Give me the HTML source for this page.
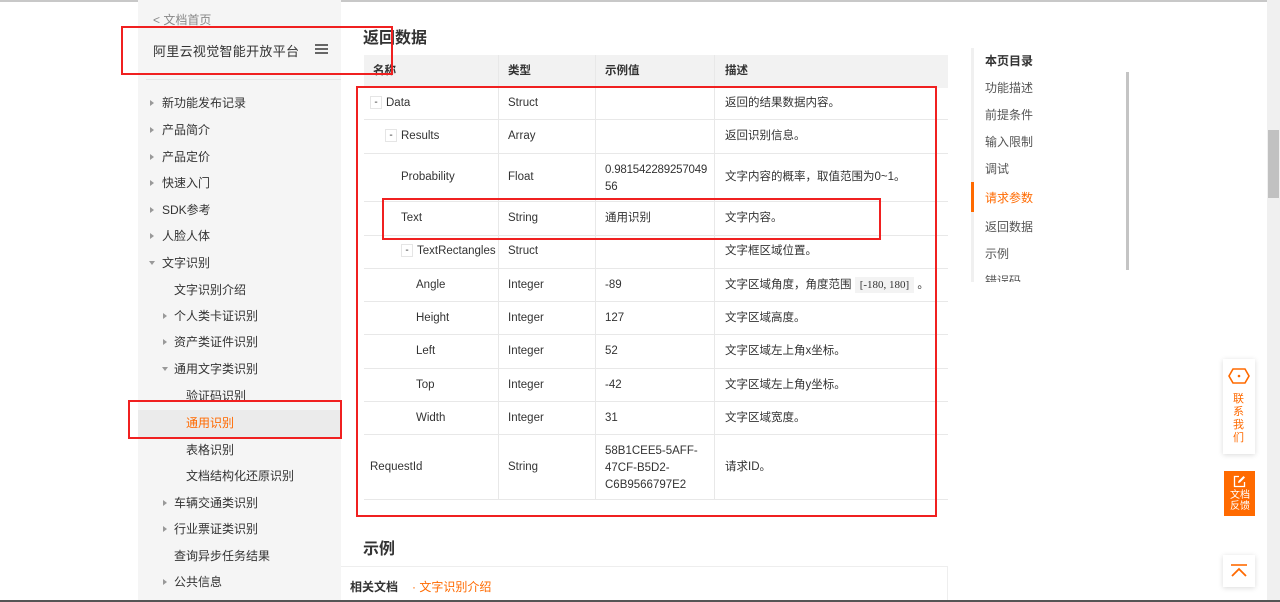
<!DOCTYPE html>
<html><head><meta charset="utf-8"><style>
*{margin:0;padding:0;box-sizing:border-box}
body{width:1280px;height:602px;overflow:hidden;background:#fff;font-family:"Liberation Sans","Noto Sans CJK SC",sans-serif;color:#333;position:relative;font-size:12px}
.a{position:absolute;white-space:nowrap}
#side{position:absolute;left:138px;top:0;width:203px;height:602px;background:#f5f5f5}
.it{position:absolute;font-size:12px;color:#333;line-height:14px}
.tri{position:absolute;width:0;height:0}
.tr{border-left:4px solid #999;border-top:3px solid transparent;border-bottom:3px solid transparent}
.td{border-top:4px solid #999;border-left:3px solid transparent;border-right:3px solid transparent}
.rb{position:absolute;border:2px solid #f02020}
.hl{position:absolute;left:364px;width:584px;height:1px;background:#e8e8e8}
.vl{position:absolute;top:55px;height:444px;width:1px;background:#e8e8e8}
.c{position:absolute;font-size:11.5px;color:#333;white-space:nowrap;line-height:14px}
.mn{display:inline-block;width:12px;height:13px;border:1px solid #e5e5e5;font-size:10px;text-align:center;line-height:11px;margin-right:4px;vertical-align:middle;background:#fff}
.toc{position:absolute;left:985px;font-size:12px;color:#555}
</style></head><body>
<div style="position:absolute;left:0;top:0;width:1280px;height:2px;background:#c8c8c8"></div>
<div id="side"></div>
<div class="a" style="left:153px;top:11px;font-size:12px;color:#888">&lt; 文档首页</div>
<div class="a" style="left:153px;top:41px;font-size:13px;letter-spacing:0.3px;color:#333">阿里云视觉智能开放平台</div>
<div style="position:absolute;left:315px;top:44px;width:13px;height:2px;background:#666;box-shadow:0 4px 0 #666,0 8px 0 #666"></div>
<div style="position:absolute;left:146px;top:79px;width:195px;height:1px;background:#e6e6e6"></div>

<div class="tri tr" style="left:150px;top:100px"></div><div class="it" style="left:162px;top:96px">新功能发布记录</div>
<div class="tri tr" style="left:150px;top:127px"></div><div class="it" style="left:162px;top:123px">产品简介</div>
<div class="tri tr" style="left:150px;top:154px"></div><div class="it" style="left:162px;top:150px">产品定价</div>
<div class="tri tr" style="left:150px;top:180px"></div><div class="it" style="left:162px;top:176px">快速入门</div>
<div class="tri tr" style="left:150px;top:207px"></div><div class="it" style="left:162px;top:203px">SDK参考</div>
<div class="tri tr" style="left:150px;top:233px"></div><div class="it" style="left:162px;top:229px">人脸人体</div>
<div class="tri td" style="left:149px;top:261px"></div><div class="it" style="left:162px;top:256px">文字识别</div>
<div class="it" style="left:174px;top:283px">文字识别介绍</div>
<div class="tri tr" style="left:163px;top:313px"></div><div class="it" style="left:174px;top:309px">个人类卡证识别</div>
<div class="tri tr" style="left:163px;top:339px"></div><div class="it" style="left:174px;top:335px">资产类证件识别</div>
<div class="tri td" style="left:162px;top:367px"></div><div class="it" style="left:174px;top:362px">通用文字类识别</div>
<div class="it" style="left:186px;top:389px">验证码识别</div>
<div style="position:absolute;left:138px;top:410px;width:203px;height:27px;background:#ebebeb"></div>
<div class="it" style="left:186px;top:416px;color:#ff6a00">通用识别</div>
<div class="it" style="left:186px;top:443px">表格识别</div>
<div class="it" style="left:186px;top:469px">文档结构化还原识别</div>
<div class="tri tr" style="left:163px;top:500px"></div><div class="it" style="left:174px;top:496px">车辆交通类识别</div>
<div class="tri tr" style="left:163px;top:526px"></div><div class="it" style="left:174px;top:522px">行业票证类识别</div>
<div class="it" style="left:174px;top:549px">查询异步任务结果</div>
<div class="tri tr" style="left:163px;top:579px"></div><div class="it" style="left:174px;top:575px">公共信息</div>

<div class="a" style="left:363px;top:24px;font-size:16px;font-weight:bold;color:#333">返回数据</div>
<div style="position:absolute;left:364px;top:55px;width:584px;height:33px;background:#f2f2f2"></div>
<div class="c" style="left:373px;top:64px;font-weight:bold">名称</div>
<div class="c" style="left:508px;top:64px;font-weight:bold">类型</div>
<div class="c" style="left:605px;top:64px;font-weight:bold">示例值</div>
<div class="c" style="left:725px;top:64px;font-weight:bold">描述</div>
<div class="vl" style="left:498px"></div><div class="vl" style="left:595px"></div><div class="vl" style="left:714px"></div>
<div class="hl" style="top:119px"></div><div class="hl" style="top:153px"></div><div class="hl" style="top:201px"></div><div class="hl" style="top:235px"></div><div class="hl" style="top:268px"></div><div class="hl" style="top:301px"></div><div class="hl" style="top:334px"></div><div class="hl" style="top:368px"></div><div class="hl" style="top:401px"></div><div class="hl" style="top:434px"></div><div class="hl" style="top:499px"></div>

<div class="c" style="left:370px;top:96px"><span class="mn">-</span>Data</div><div class="c" style="left:508px;top:96px">Struct</div><div class="c" style="left:725px;top:96px">返回的结果数据内容。</div>
<div class="c" style="left:385px;top:129px"><span class="mn">-</span>Results</div><div class="c" style="left:508px;top:129px">Array</div><div class="c" style="left:725px;top:129px">返回识别信息。</div>
<div class="c" style="left:401px;top:170px">Probability</div><div class="c" style="left:508px;top:170px">Float</div><div class="c" style="left:605px;top:162px;line-height:17px;letter-spacing:-0.2px">0.981542289257049<br>56</div><div class="c" style="left:725px;top:170px">文字内容的概率，取值范围为0~1。</div>
<div class="c" style="left:401px;top:211px">Text</div><div class="c" style="left:508px;top:211px">String</div><div class="c" style="left:605px;top:211px">通用识别</div><div class="c" style="left:725px;top:211px">文字内容。</div>
<div class="c" style="left:401px;top:244px"><span class="mn">-</span>TextRectangles</div><div class="c" style="left:508px;top:244px">Struct</div><div class="c" style="left:725px;top:244px">文字框区域位置。</div>
<div class="c" style="left:416px;top:278px">Angle</div><div class="c" style="left:508px;top:278px">Integer</div><div class="c" style="left:605px;top:278px">-89</div><div class="c" style="left:725px;top:278px">文字区域角度，角度范围 <span style="background:#f3f3f3;padding:2px 5px;font-family:'Liberation Serif',serif;font-size:11px">[-180, 180]</span> 。</div>
<div class="c" style="left:416px;top:311px">Height</div><div class="c" style="left:508px;top:311px">Integer</div><div class="c" style="left:605px;top:311px">127</div><div class="c" style="left:725px;top:311px">文字区域高度。</div>
<div class="c" style="left:416px;top:344px">Left</div><div class="c" style="left:508px;top:344px">Integer</div><div class="c" style="left:605px;top:344px">52</div><div class="c" style="left:725px;top:344px">文字区域左上角x坐标。</div>
<div class="c" style="left:416px;top:378px">Top</div><div class="c" style="left:508px;top:378px">Integer</div><div class="c" style="left:605px;top:378px">-42</div><div class="c" style="left:725px;top:378px">文字区域左上角y坐标。</div>
<div class="c" style="left:416px;top:411px">Width</div><div class="c" style="left:508px;top:411px">Integer</div><div class="c" style="left:605px;top:411px">31</div><div class="c" style="left:725px;top:411px">文字区域宽度。</div>
<div class="c" style="left:370px;top:460px">RequestId</div><div class="c" style="left:508px;top:460px">String</div><div class="c" style="left:605px;top:443px;line-height:17px">58B1CEE5-5AFF-<br>47CF-B5D2-<br>C6B9566797E2</div><div class="c" style="left:725px;top:460px">请求ID。</div>

<div class="a" style="left:363px;top:535px;font-size:16px;font-weight:bold">示例</div>
<div style="position:absolute;left:341px;top:566px;width:607px;height:36px;border-top:1px solid #eee;border-right:1px solid #eee"></div>
<div class="c" style="left:350px;top:580px;font-weight:bold;font-size:12px">相关文档</div>
<div class="c" style="left:412px;top:580px;color:#ff6a00;font-size:12px">· 文字识别介绍</div>

<div style="position:absolute;left:971px;top:48px;width:3px;height:234px;background:#f0f0f0"></div>
<div style="position:absolute;left:971px;top:182px;width:3px;height:30px;background:#ff6a00"></div>
<div style="position:absolute;left:1126px;top:72px;width:3px;height:198px;background:#c4c4c4"></div>
<div class="toc" style="top:52px;font-weight:bold;color:#333">本页目录</div>
<div class="toc" style="top:79px">功能描述</div>
<div class="toc" style="top:106px">前提条件</div>
<div class="toc" style="top:133px">输入限制</div>
<div class="toc" style="top:160px">调试</div>
<div class="toc" style="top:189px;color:#ff6a00">请求参数</div>
<div class="toc" style="top:218px">返回数据</div>
<div class="toc" style="top:245px">示例</div>
<div class="toc" style="top:272px;height:10px;overflow:hidden">错误码</div>

<div style="position:absolute;left:1267px;top:0;width:13px;height:602px;background:#f0f0f0"></div>
<div style="position:absolute;left:1268px;top:130px;width:11px;height:68px;background:#c1c1c1"></div>

<div style="position:absolute;left:1223px;top:359px;width:32px;height:95px;background:#fff;box-shadow:0 1px 5px rgba(0,0,0,.15)"></div>
<svg class="a" style="left:1228px;top:368px" width="22" height="16" viewBox="0 0 22 16"><path d="M5 1H17L21 8L17 15H5L1 8Z" fill="none" stroke="#ff6a00" stroke-width="1.6"/><circle cx="11" cy="8" r="1.3" fill="#ff6a00"/></svg>
<div class="a" style="left:1233px;top:393px;font-size:11px;line-height:13px;color:#ff6a00;white-space:normal;width:12px">联系我们</div>
<div style="position:absolute;left:1224px;top:471px;width:31px;height:45px;background:#ff6a00"></div>
<svg class="a" style="left:1233px;top:475px" width="13" height="13" viewBox="0 0 13 13"><path d="M6 1.5H1.5V11.5H11.5V7" fill="none" stroke="#fff" stroke-width="1.3"/><path d="M5 8L5.5 6L10.5 1L12 2.5L7 7.5Z" fill="#fff"/></svg>
<div class="a" style="left:1230px;top:490px;font-size:10px;line-height:11px;color:#fff;text-align:center">文档<br>反馈</div>
<div style="position:absolute;left:1223px;top:555px;width:32px;height:32px;background:#fff;box-shadow:0 1px 5px rgba(0,0,0,.15)"></div>
<svg class="a" style="left:1230px;top:564px" width="18" height="14" viewBox="0 0 18 14"><path d="M1 1H17" stroke="#ff6a00" stroke-width="1.6"/><path d="M2 12L9 5L16 12" fill="none" stroke="#ff6a00" stroke-width="1.8"/></svg>
<div style="position:absolute;left:0;top:600px;width:1280px;height:2px;background:#555"></div>

<div class="rb" style="left:121px;top:26px;width:272px;height:49px"></div>
<div class="rb" style="left:356px;top:86px;width:581px;height:431px"></div>
<div class="rb" style="left:382px;top:198px;width:499px;height:42px"></div>
<div class="rb" style="left:128px;top:400px;width:214px;height:39px"></div>
</body></html>
